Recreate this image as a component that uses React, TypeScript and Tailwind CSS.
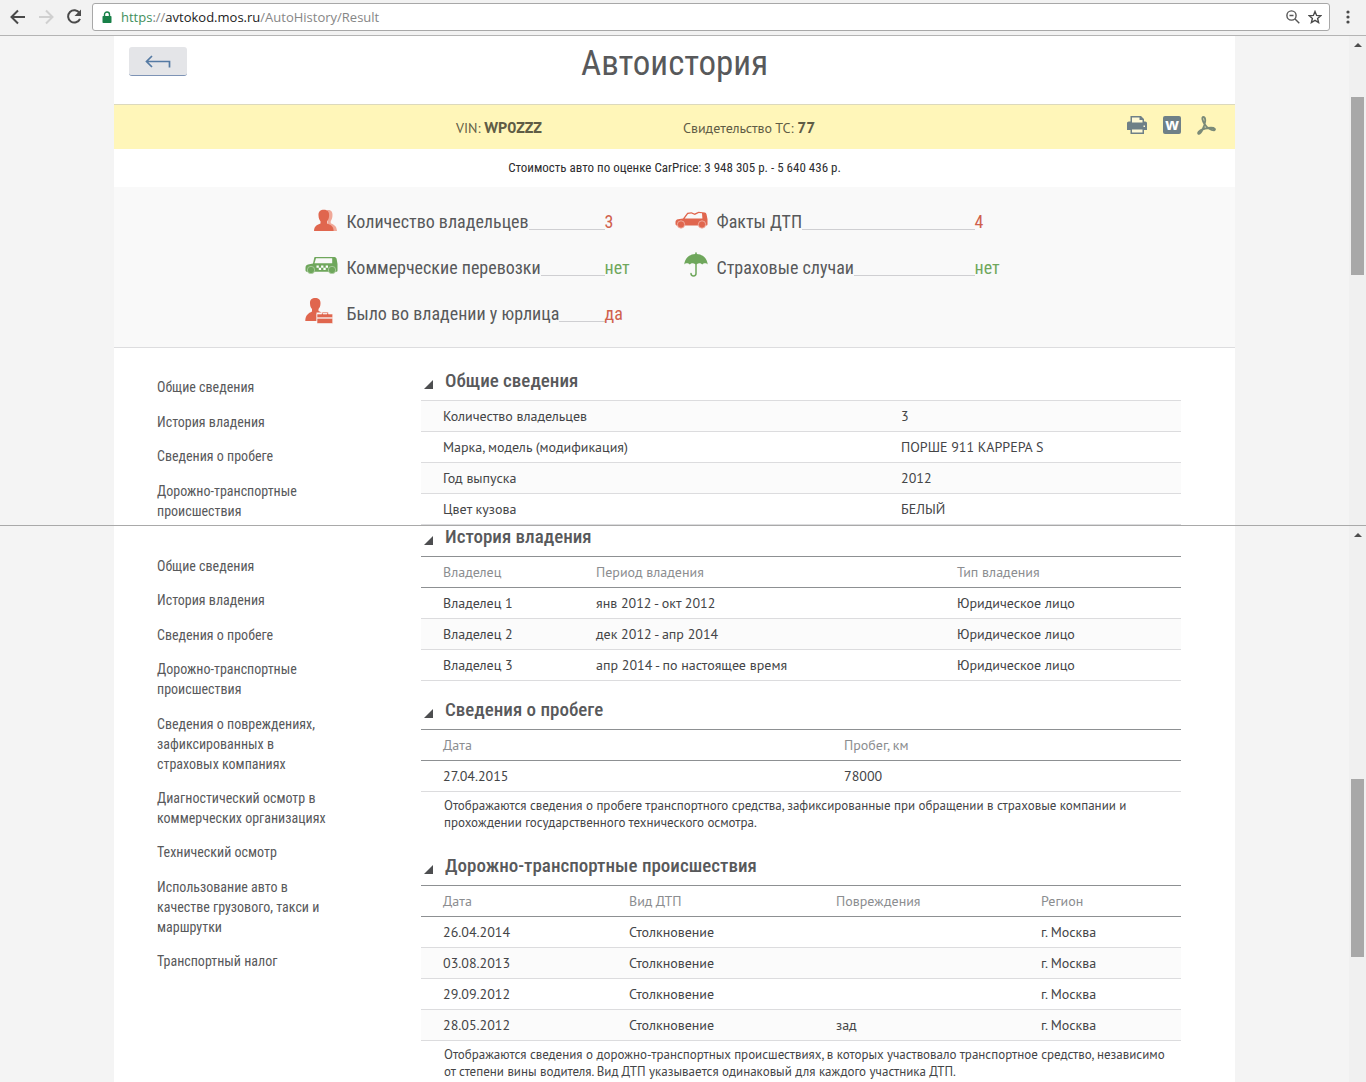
import type { ReactNode } from "react";

const MENU = [
  "Общие сведения",
  "История владения",
  "Сведения о пробеге",
  "Дорожно-транспортные происшествия",
  "Сведения о повреждениях, зафиксированных в страховых компаниях",
  "Диагностический осмотр в коммерческих организациях",
  "Технический осмотр",
  "Использование авто в качестве грузового, такси и маршрутки",
  "Транспортный налог",
];

function OwnersIcon() {
  return (
    <svg width="25" height="23" viewBox="0 0 25 23" aria-hidden="true">
      <path
        fill="#f0a898"
        d="M14 1.2c4.2-.8 6 2 5.400 6.300c-.2 2-1 3.500-1.700 4.500v2.200c3 1.300 6 2.500 6.300 7.800h-9z"
      />
      <path
        fill="#e0664e"
        d="M5.500 6.500C5.300 2.500 7.500.8 10.800.8s5.500 1.700 5.300 5.700c-.1 2.800-1 4.700-2 5.700v2.300c3 1.400 6.500 2.200 6.500 7.500H1c0-5.300 3.500-6.100 6.500-7.500v-2.300c-1-1-1.900-2.900-2-5.700z"
      />
    </svg>
  );
}

function TaxiIcon() {
  return (
    <svg width="33" height="18" viewBox="0 0 33 18" aria-hidden="true">
      <path
        fill="#6fa75c"
        fillRule="evenodd"
        d="M10 0h19.500c1.200 0 2 1 2.200 2.200l.8 4.800v6.500c0 .8-.5 1.300-1.300 1.300H2c-1 0-1.500-.6-1.500-1.500v-2.500C.5 9 1.500 7.900 3 7.500l5-1L9.200 1c.1-.6.3-1 .8-1zm1 1.300L9.500 6.300h17.700V1.300z"
      />
      <path
        fill="#ffffff"
        d="M11.500 8.500h2.300v2.200h-2.300zM16.100 8.500h2.300v2.200h-2.300zM20.700 8.500H23v2.200h-2.300zM13.800 10.700h2.300v2.200h-2.300zM18.400 10.700h2.300v2.200h-2.300z"
      />
      <circle cx="6" cy="13" r="3.700" fill="#6fa75c" stroke="#b5d2aa" strokeWidth="0.800" />
      <circle cx="27" cy="13" r="3.700" fill="#6fa75c" stroke="#b5d2aa" strokeWidth="0.800" />
    </svg>
  );
}

function CompanyIcon() {
  return (
    <svg width="28" height="27" viewBox="0 0 28 27" aria-hidden="true">
      <path
        fill="#e0664e"
        d="M5 6.500C4.800 2.500 7 1 10.200 1s5.500 1.500 5.300 5.500c-.1 2.800-1 4.500-2 5.500v2l3.300 1.500h-5.300V24H.3c0-6 3.200-7.800 6.700-9.500V12c-1-1-1.900-2.700-2-5.500z"
      />
      <path
        fill="#e0664e"
        fillRule="evenodd"
        stroke="#f9f9f9"
        strokeWidth="0.600"
        d="M12 17h4.800v-.7c0-.8.5-1.300 1.300-1.300h4c.8 0 1.300.5 1.300 1.300v.7h4.300v3.800H12zm6 0h4v-.8h-4zM12 21.200h15.700V26.500H12z"
      />
    </svg>
  );
}

function CrashIcon() {
  return (
    <svg width="33" height="18" viewBox="0 0 33 18" aria-hidden="true">
      <path
        fill="#e0664e"
        fillRule="evenodd"
        d="M8 7.500l4.300-5.700 4.200-.5 3 1.200L23.500.8l6.200.6c1 .2 1.500.8 1.800 1.800l1 5v5c0 .8-.5 1.300-1.300 1.300H2c-1 0-1.500-.6-1.500-1.500v-2C.5 9.500 1.500 8.500 3 8.200zM13 3L9.700 7.400h17.700L27 2.300l-3.200-.2-4 2-3.500-1.500z"
      />
      <circle cx="6" cy="13.500" r="3.700" fill="#e0664e" stroke="#f3b9ad" strokeWidth="0.800" />
      <circle cx="27" cy="13.500" r="3.700" fill="#e0664e" stroke="#f3b9ad" strokeWidth="0.800" />
    </svg>
  );
}

function UmbrellaIcon() {
  return (
    <svg width="24" height="25" viewBox="0 0 24 25" aria-hidden="true">
      <path
        fill="#6fa75c"
        d="M11.200 2V.8c0-.8 1.600-.8 1.600 0V2c6 .3 10.400 4.500 10.900 10.500-1-1.500-4-1.700-5.500 0-1.400-1.700-4-1.700-5.400-.2h-1.600c-1.400-1.500-4-1.500-5.400.2-1.500-1.700-4.500-1.500-5.500 0C.8 6.500 5.200 2.300 11.200 2z"
      />
      <path
        d="M12 11v10.500c0 3.200-5 3.200-5 0"
        fill="none"
        stroke="#6fa75c"
        strokeWidth="1.500"
        strokeLinecap="round"
      />
    </svg>
  );
}

type Stat = { label: string; value: string; good?: boolean; icon: ReactNode; iconBox: string };

const STATS: Stat[] = [
  { label: "Количество владельцев", value: "3", icon: <OwnersIcon />, iconBox: "mb-1 justify-end" },
  { label: "Факты ДТП", value: "4", icon: <CrashIcon />, iconBox: "mb-1 justify-end" },
  { label: "Коммерческие перевозки", value: "нет", good: true, icon: <TaxiIcon />, iconBox: "mb-1 justify-end" },
  { label: "Страховые случаи", value: "нет", good: true, icon: <UmbrellaIcon />, iconBox: "mb-2 justify-end" },
  { label: "Было во владении у юрлица", value: "да", icon: <CompanyIcon />, iconBox: "mb-2 justify-start" },
];

function StatItem({ label, value, good, icon, iconBox }: Stat) {
  return (
    <li className="flex h-[46px] items-center">
      <span className={`flex w-[33px] shrink-0 ${iconBox}`}>{icon}</span>
      <span className="ml-[9px] flex w-[258px] leading-6">
        <span>{label}</span>
        <span className="mb-1 grow border-b border-[#cfcfd2]" />
      </span>
      <span className={good ? "leading-6 text-[#6fa75c]" : "leading-6 text-[#d0604c]"}>{value}</span>
    </li>
  );
}

function Menu({ items, label, className }: { items: string[]; label: string; className: string }) {
  return (
    <nav
      aria-label={label}
      className={`flex w-[180px] shrink-0 flex-col justify-between font-['Roboto_Condensed','Roboto',sans-serif] text-[14px] leading-5 text-[#58595b] ${className}`}
    >
      {items.map((item) => (
        <a key={item} href="#">
          {item}
        </a>
      ))}
    </nav>
  );
}

function SectionTitle({ children }: { children: ReactNode }) {
  return (
    <h2 className="mb-2 flex items-end font-['Roboto_Condensed','Roboto',sans-serif] text-[19px] leading-[22px] font-medium text-[#58595b]">
      <svg width="9" height="9" viewBox="0 0 9 9" className="mr-3 mb-[3px] ml-[3px] shrink-0" aria-hidden="true">
        <path d="M9 0v9H0z" fill="#4d4e50" />
      </svg>
      {children}
    </h2>
  );
}

function DataTable({ head, rows, widths }: { head?: string[]; rows: string[][]; widths: string[] }) {
  return (
    <table
      className={`w-full table-fixed border-separate border-spacing-0 border-t text-left text-[14px] leading-5 text-[#444547] ${
        head ? "border-[#8d9092]" : "border-[#dcdcde]"
      }`}
    >
      <colgroup>
        {widths.map((w, i) => (
          <col key={i} className={w} />
        ))}
      </colgroup>
      {head && (
        <thead>
          <tr>
            {head.map((h) => (
              <th
                key={h}
                scope="col"
                className="h-[31px] border-b border-[#8d9092] py-0 pr-0 pl-[22px] font-normal text-[#8b8d90]"
              >
                {h}
              </th>
            ))}
          </tr>
        </thead>
      )}
      <tbody>
        {rows.map((row, r) => (
          <tr key={r} className={r % 2 === (head ? 1 : 0) ? "bg-[#fbfbfb]" : "bg-white"}>
            {row.map((cell, c) => (
              <td key={c} className="h-[31px] border-b border-[#dcdcde] py-0 pr-0 pl-[22px]">
                {cell}
              </td>
            ))}
          </tr>
        ))}
      </tbody>
    </table>
  );
}

function Note({ children }: { children: ReactNode }) {
  return <p className="mt-[5px] pr-4 pl-[23px] text-[13px] leading-[17px] text-[#444547]">{children}</p>;
}

function Scrollbar({ thumb }: { thumb: string }) {
  return (
    <div className="flex w-[17px] shrink-0 flex-col items-center bg-[#f0f0f0]" aria-hidden="true">
      <svg width="8" height="4" viewBox="0 0 8 4" className="mt-[7px] shrink-0">
        <path d="M0 4l4-4 4 4z" fill="#4d4d4d" />
      </svg>
      <div className={`h-[178px] w-[13px] bg-[#a8a8a8] ${thumb}`} />
    </div>
  );
}

function BrowserBar() {
  return (
    <div className="flex h-9 items-center border-b border-[#b4b4b4] bg-[#f2f2f2] pb-[2px] pl-[9px]">
      <button type="button" aria-label="Назад" className="shrink-0">
        <svg width="18" height="18" viewBox="0 0 18 18" fill="none" stroke="#4a4a4a" strokeWidth="2">
          <path d="M16 9H3M9 2.500L2.500 9 9 15.500" />
        </svg>
      </button>
      <button type="button" aria-label="Вперёд" className="ml-[10px] shrink-0">
        <svg width="18" height="18" viewBox="0 0 18 18" fill="none" stroke="#d0d0d0" strokeWidth="2">
          <path d="M2 9h13M9 2.500L15.500 9 9 15.500" />
        </svg>
      </button>
      <button type="button" aria-label="Обновить" className="ml-[10px] shrink-0">
        <svg width="18" height="18" viewBox="0 0 18 18" fill="none" stroke="#4a4a4a" strokeWidth="2">
          <path d="M14.500 5A6.200 6.200 0 1 0 15 10.800" />
          <path d="M16 1.500V8H9.500z" fill="#4a4a4a" stroke="none" />
        </svg>
      </button>
      <div className="ml-[9px] flex h-7 grow items-center rounded-[3px] border border-[#a8a8a8] bg-white pr-[7px] pl-[9px]">
        <svg width="10" height="12" viewBox="0 0 10 12" className="shrink-0" aria-label="Защищено">
          <path d="M2.500 6V3.500a2.500 2.500 0 0 1 5 0V6" fill="none" stroke="#188048" strokeWidth="1.400" />
          <rect x="0.500" y="5" width="9" height="7" rx="0.800" fill="#188048" />
        </svg>
        <p className="ml-[9px] grow font-['Open_Sans','Noto_Sans',sans-serif] text-[13px] leading-5 text-[#868686]">
          <span className="text-[#3f8f5c]">https</span>://<span className="text-[#222222]">avtokod.mos.ru</span>
          /AutoHistory/Result
        </p>
        <button type="button" aria-label="Масштаб">
          <svg width="14" height="14" viewBox="0 0 14 14" fill="none" stroke="#555555" strokeWidth="1.400">
            <circle cx="5.500" cy="5.500" r="4.600" />
            <path d="M9 9l4.300 4.300M3.500 5.500h4" />
          </svg>
        </button>
        <button type="button" aria-label="Добавить в закладки" className="ml-2">
          <svg width="14" height="14" viewBox="0 0 14 14" fill="none" stroke="#4a4a4a" strokeWidth="1.400">
            <path d="M7 1.500l1.600 3.900 4.200.3-3.200 2.700 1 4.100L7 10.300l-3.600 2.200 1-4.100L1.200 5.700l4.200-.3z" />
          </svg>
        </button>
      </div>
      <button type="button" aria-label="Меню" className="mx-4 shrink-0">
        <svg width="4" height="14" viewBox="0 0 4 14" fill="#4a4a4a">
          <circle cx="2" cy="2" r="1.600" />
          <circle cx="2" cy="7" r="1.600" />
          <circle cx="2" cy="12" r="1.600" />
        </svg>
      </button>
    </div>
  );
}

export default function App() {
  return (
    <div className="overflow-hidden bg-[#f4f4f4] font-['PT_Sans','Noto_Sans',sans-serif]">
      <BrowserBar />

      <div className="flex">
        <div className="min-w-0 grow">
          <main className="mx-auto w-full max-w-[1121px] bg-white">
            <header className="grid h-[68px] grid-cols-[1fr_auto_1fr] items-start px-[15px]">
              <button
                type="button"
                aria-label="Вернуться"
                className="mt-[11px] flex h-[29px] w-[58px] items-center justify-center rounded-[3px] border-b border-[#7d93b5] bg-[#e4e5e8]"
              >
                <svg width="26" height="14" viewBox="0 0 26 14" fill="none" stroke="#557aa3" strokeWidth="1.700">
                  <path d="M7 2L1.500 7.500 7 13M1.500 7.500H24.500V13.500" />
                </svg>
              </button>
              <h1 className="mt-2 font-['Roboto_Condensed','Roboto',sans-serif] text-[35px] leading-10 text-[#58595b]">
                Автоистория
              </h1>
            </header>

            <div className="flex h-[45px] items-center border-t border-[#dcd9bd] bg-[#fff6b9] pr-[19px] pl-[342px] text-[14px] leading-6 text-[#5f5c45]">
              <p className="w-[227px]">
                VIN: <b className="text-[16px]">WP0ZZZ</b>
              </p>
              <p>
                Свидетельство ТС: <b className="text-[16px]">77</b>
              </p>
              <div className="mb-1 ml-auto flex items-center gap-4">
                <button type="button" aria-label="Печать">
                  <svg width="20" height="18" viewBox="0 0 20 18">
                    <path
                      fill="#6f8087"
                      d="M3.500 0H14l3 3v2.500h1.200c1 0 1.800.8 1.800 1.800V14h-3v4H3.500v-4H0V7.300c0-1 .8-1.800 1.800-1.800h1.700z"
                    />
                    <path fill="#fff9d5" d="M5 1.500h7.500V4h3v2.500H5zM5 13.500h10.500v3H5zM16.500 9.500h1.500V11h-1.500z" />
                  </svg>
                </button>
                <button
                  type="button"
                  aria-label="Скачать Word"
                  className="flex size-[18px] items-center justify-center rounded-[2px] bg-[#6f8087] pb-[2px] font-['Open_Sans',sans-serif] text-[16px] leading-4 font-bold text-white"
                >
                  w
                </button>
                <button type="button" aria-label="Скачать PDF">
                  <svg
                    width="19"
                    height="19"
                    viewBox="0 0 19 19"
                    fill="none"
                    stroke="#7a8a78"
                    strokeWidth="1.900"
                    strokeLinejoin="round"
                  >
                    <path d="M6.500 1C4.500 1 5.500 5 7.500 8c2.300 3.600 6.500 6.300 9.500 6.300 1.800-.5 1-2.500-3-2.500-3.500 0-8 1-10.800 2.700C.5 16.200.8 18 2 17.800c2-.5 5.800-7.300 6.200-12.800C8.300 2.500 7.800 1 6.500 1z" />
                  </svg>
                </button>
              </div>
            </div>

            <p className="py-[9px] text-center font-['Roboto_Condensed','Roboto',sans-serif] text-[13px] leading-5 text-[#2e2e30]">
              Стоимость авто по оценке CarPrice: 3 948 305 р. - 5 640 436 р.
            </p>

            <ul className="grid grid-cols-[370px_370px] justify-center border-b border-[#dddddf] bg-[#f9f9f9] pt-3 pb-[10px] font-['Roboto_Condensed','Roboto',sans-serif] text-[18px] text-[#58595b]">
              {STATS.map((s) => (
                <StatItem key={s.label} {...s} />
              ))}
            </ul>

            <div className="flex justify-between pr-[54px] pl-[43px]">
              <Menu items={MENU.slice(0, 4)} label="Разделы отчёта" className="mt-[29px] h-[144px]" />
              <section className="w-[760px] pt-[22px]">
                <SectionTitle>Общие сведения</SectionTitle>
                <DataTable
                  widths={["w-[458px]", "w-auto"]}
                  rows={[
                    ["Количество владельцев", "3"],
                    ["Марка, модель (модификация)", "ПОРШЕ 911 КАРРЕРА S"],
                    ["Год выпуска", "2012"],
                    ["Цвет кузова", "БЕЛЫЙ"],
                  ]}
                />
              </section>
            </div>
          </main>
        </div>
        <Scrollbar thumb="mt-[50px]" />
      </div>

      <div className="flex border-t border-[#a9a9a9]">
        <div className="min-w-0 grow">
          <div className="mx-auto flex w-full max-w-[1121px] justify-between bg-white pr-[54px] pl-[43px]">
            <Menu items={MENU} label="Все разделы отчёта" className="mt-[30px] h-[415px]" />
            <div className="flex w-[760px] flex-col pb-[2px]">
              <section>
                <SectionTitle>История владения</SectionTitle>
                <DataTable
                  widths={["w-[153px]", "w-[361px]", "w-auto"]}
                  head={["Владелец", "Период владения", "Тип владения"]}
                  rows={[
                    ["Владелец 1", "янв 2012 - окт 2012", "Юридическое лицо"],
                    ["Владелец 2", "дек 2012 - апр 2014", "Юридическое лицо"],
                    ["Владелец 3", "апр 2014 - по настоящее время", "Юридическое лицо"],
                  ]}
                />
              </section>
              <section className="mt-[18px]">
                <SectionTitle>Сведения о пробеге</SectionTitle>
                <DataTable
                  widths={["w-[401px]", "w-auto"]}
                  head={["Дата", "Пробег, км"]}
                  rows={[["27.04.2015", "78000"]]}
                />
                <Note>
                  Отображаются сведения о пробеге транспортного средства, зафиксированные при обращении в страховые
                  компании и прохождении государственного технического осмотра.
                </Note>
              </section>
              <section className="mt-6">
                <SectionTitle>Дорожно-транспортные происшествия</SectionTitle>
                <DataTable
                  widths={["w-[186px]", "w-[207px]", "w-[205px]", "w-auto"]}
                  head={["Дата", "Вид ДТП", "Повреждения", "Регион"]}
                  rows={[
                    ["26.04.2014", "Столкновение", "", "г. Москва"],
                    ["03.08.2013", "Столкновение", "", "г. Москва"],
                    ["29.09.2012", "Столкновение", "", "г. Москва"],
                    ["28.05.2012", "Столкновение", "зад", "г. Москва"],
                  ]}
                />
                <Note>
                  Отображаются сведения о дорожно-транспортных происшествиях, в которых участвовало транспортное
                  средство, независимо от степени вины водителя. Вид ДТП указывается одинаковый для каждого участника
                  ДТП.
                </Note>
              </section>
            </div>
          </div>
        </div>
        <Scrollbar thumb="mt-[242px]" />
      </div>
    </div>
  );
}
